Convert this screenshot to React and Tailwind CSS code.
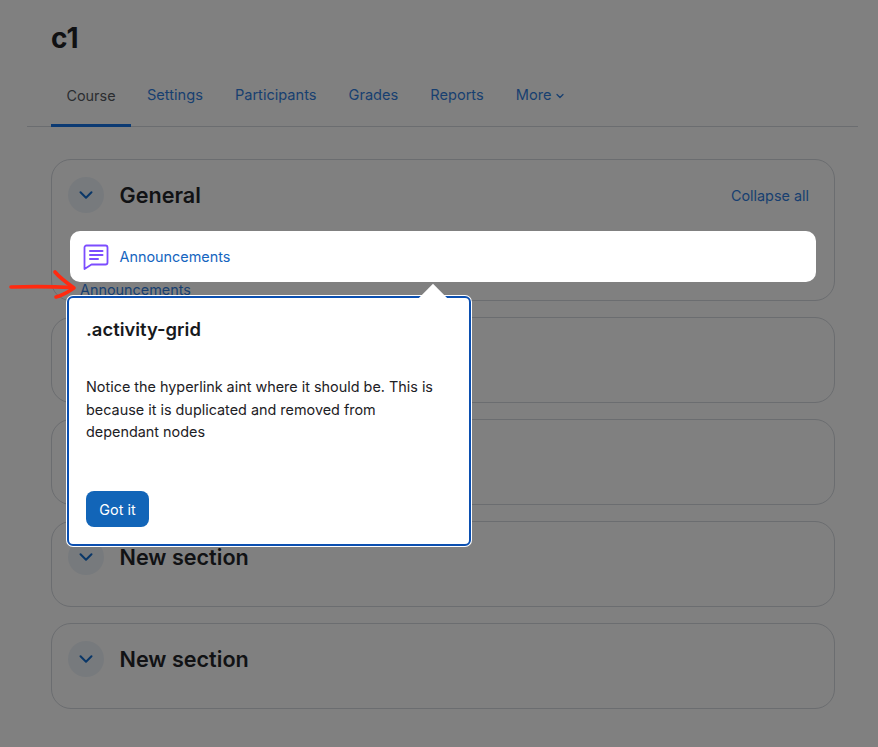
import { ChevronDown } from 'lucide-react';

const tabs = ['Settings', 'Participants', 'Grades', 'Reports'];

function SectionHeader({ title, children }) {
  return (
    <div className="flex items-center">
      <span className="flex h-9 w-9 items-center justify-center rounded-full bg-[#777a7d] text-[#0a3768]">
        <ChevronDown size={22} strokeWidth={2.2} />
      </span>
      <h3 className="ml-[15.500px] text-[21.6px] leading-9 font-semibold text-[#111214]">{title}</h3>
      {children}
    </div>
  );
}

function Section({ title }) {
  return (
    <section className="h-[86px] rounded-[20px] border border-[#6b6d70] px-4 pt-[17px]">
      <SectionHeader title={title} />
    </section>
  );
}

export default function App() {
  return (
    <div className="relative h-[747px] w-[878px] overflow-hidden bg-[#808080] font-['Inter',sans-serif]">
      <header className="pt-[20px]">
        <h1 className="ml-[51px] text-[28px] leading-9 font-bold text-[#101113]">c1</h1>
        <nav className="mt-[14px] ml-[27px] flex h-[57px] w-[831px] border-b border-[#6b6d70] pl-6 text-[14.6px]">
          <span className="flex h-[57px] w-[80px] items-center justify-center border-b-[3px] border-[#0b3a73] pb-[2px] text-[14.4px] text-[#2b2d30]">Course</span>
          {tabs.map((tab) => (
            <span key={tab} className="flex h-[57px] items-center px-4 pb-[5px] text-[#173f70]">{tab}</span>
          ))}
          <span className="flex h-[57px] items-center gap-[3px] px-4 pb-[5px] text-[#173f70]">
            More <ChevronDown size={12} strokeWidth={2.5} />
          </span>
        </nav>
      </header>

      <main className="mt-[32px] ml-[51px] flex w-[784px] flex-col gap-4">
        <section className="h-[142px] rounded-[20px] border border-[#6b6d70] px-4 pt-[17px]">
          <SectionHeader title="General">
            <span className="mr-[9px] ml-auto pt-[2px] text-[14.4px] text-[#173f70]">Collapse all</span>
          </SectionHeader>
          <div className="mt-[67px] ml-[12px] text-[14.4px] leading-[20px] text-[#173f70]">Announcements</div>
        </section>
        <Section title="New section" />
        <Section title="New section" />
        <Section title="New section" />
        <Section title="New section" />
      </main>

      {/* spotlight on the activity row */}
      <div className="absolute top-[231px] left-[70px] flex h-[51px] w-[746px] items-center rounded-[10px] bg-white pl-[13px]">
        <svg width="26" height="26" viewBox="0 0 26 26" fill="none" stroke="#7c4dff" strokeWidth="1.8" strokeLinejoin="round" strokeLinecap="round">
          <path d="M3.500 1.500h19a2 2 0 0 1 2 2v15a2 2 0 0 1-2 2H8.500l-7 4.500V3.500a2 2 0 0 1 2-2z" />
          <path d="M7 7h12.500M7 11h12.500M7 15h8" strokeWidth="2" />
        </svg>
        <span className="ml-[10.500px] text-[14.4px] text-[#1565c0]">Announcements</span>
      </div>

      {/* hand drawn arrow */}
      <svg className="absolute top-[268px] left-[8px]" width="70" height="34" viewBox="0 0 70 34" fill="none" stroke="#ff2a10" strokeWidth="3.600" strokeLinecap="round" strokeLinejoin="round">
        <path d="M3 19C20 18.500 45 18.500 64 19.500" />
        <path d="M47 4c5 6 12 11 19 16-5 3-10 7-18 9" />
      </svg>

      {/* tour step */}
      <div className="absolute top-[296px] left-[67px] h-[250px] w-[404px] rounded-[6px] border-[2px] border-[#0b4fb0] bg-white px-[17px] shadow-[0_0_0_1px_white]">
        <span className="absolute -top-[10px] left-[354px] h-[20px] w-[20px] rotate-45 bg-white" />
        <h2 className="relative mt-[20px] text-[18.400px] leading-[22px] font-semibold text-[#17191c]">.activity-grid</h2>
        <p className="mt-[36px] text-[14.400px] leading-[22.700px] text-[#1d2125]">
          Notice the hyperlink aint where it should be. This is because it is duplicated and removed from dependant nodes
        </p>
        <button className="mt-[47px] h-9 w-[63px] rounded-[8px] bg-[#1265b8] pt-[1px] text-[14.400px] text-white">Got it</button>
      </div>
    </div>
  );
}
